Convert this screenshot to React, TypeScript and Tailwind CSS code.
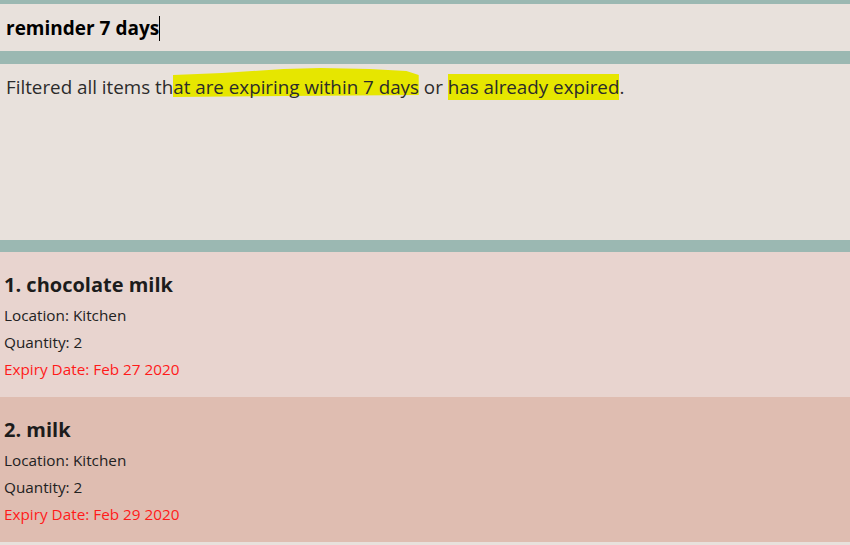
const items = [
  { name: "chocolate milk", location: "Kitchen", quantity: 2, expiry: "Feb 27 2020", bg: "bg-[#e8d4cf]" },
  { name: "milk", location: "Kitchen", quantity: 2, expiry: "Feb 29 2020", bg: "bg-[#dfbdb1]" },
];

function ItemCard({ index, name, location, quantity, expiry, bg }: { index: number; name: string; location: string; quantity: number; expiry: string; bg: string }) {
  return (
    <div className={`flex h-[145px] flex-col px-1 pt-[20px] ${bg}`}>
      <h2 className="text-[20px] leading-[26px] font-bold text-[#1c1c1c]">
        {index}. {name}
      </h2>
      <p className="mt-[4px] text-[15.3px] leading-[27px] text-[#222]">Location: {location}</p>
      <p className="text-[15.3px] leading-[27px] text-[#222]">Quantity: {quantity}</p>
      <p className="text-[15.3px] leading-[27px] text-[#ff1a1a]">Expiry Date: {expiry}</p>
    </div>
  );
}

export default function App() {
  return (
    <div className="flex h-[545px] w-[850px] flex-col overflow-hidden bg-[#e8e1dc] font-['Open_Sans',sans-serif]">
      <div className="h-1 bg-[#9bb8b2]" />
      <div className="flex h-[47px] items-center px-[6px] pt-[2px]">
        <span className="text-[19px] font-bold text-black">reminder 7 days</span>
        <span className="h-[25px] w-px bg-black" />
      </div>
      <div className="h-[13px] bg-[#9bb8b2]" />
      <div className="h-[176px] px-[6px] pt-[10px] text-[18.8px] leading-[26px] text-[#2b2b2b]">
        <p className="relative">
          Filtered all items th
          <span className="relative">
            <svg className="absolute -top-[6px] left-0 -z-0 h-[29px] w-full" viewBox="0 0 100 29" preserveAspectRatio="none">
              <path d="M0 7 L20 5 L45 1 L60 0 L80 1 L95 3 L100 7 L100 27 L0 29 Z" fill="#e6e600" />
            </svg>
            <span className="relative">at are expiring within 7 days</span>
          </span>{" "}
          or <span className="bg-[#e6e600]">has already expired</span>.
        </p>
      </div>
      <div className="h-[12px] bg-[#9bb8b2]" />
      {items.map((item, i) => (
        <ItemCard key={item.name} index={i + 1} {...item} />
      ))}
    </div>
  );
}
